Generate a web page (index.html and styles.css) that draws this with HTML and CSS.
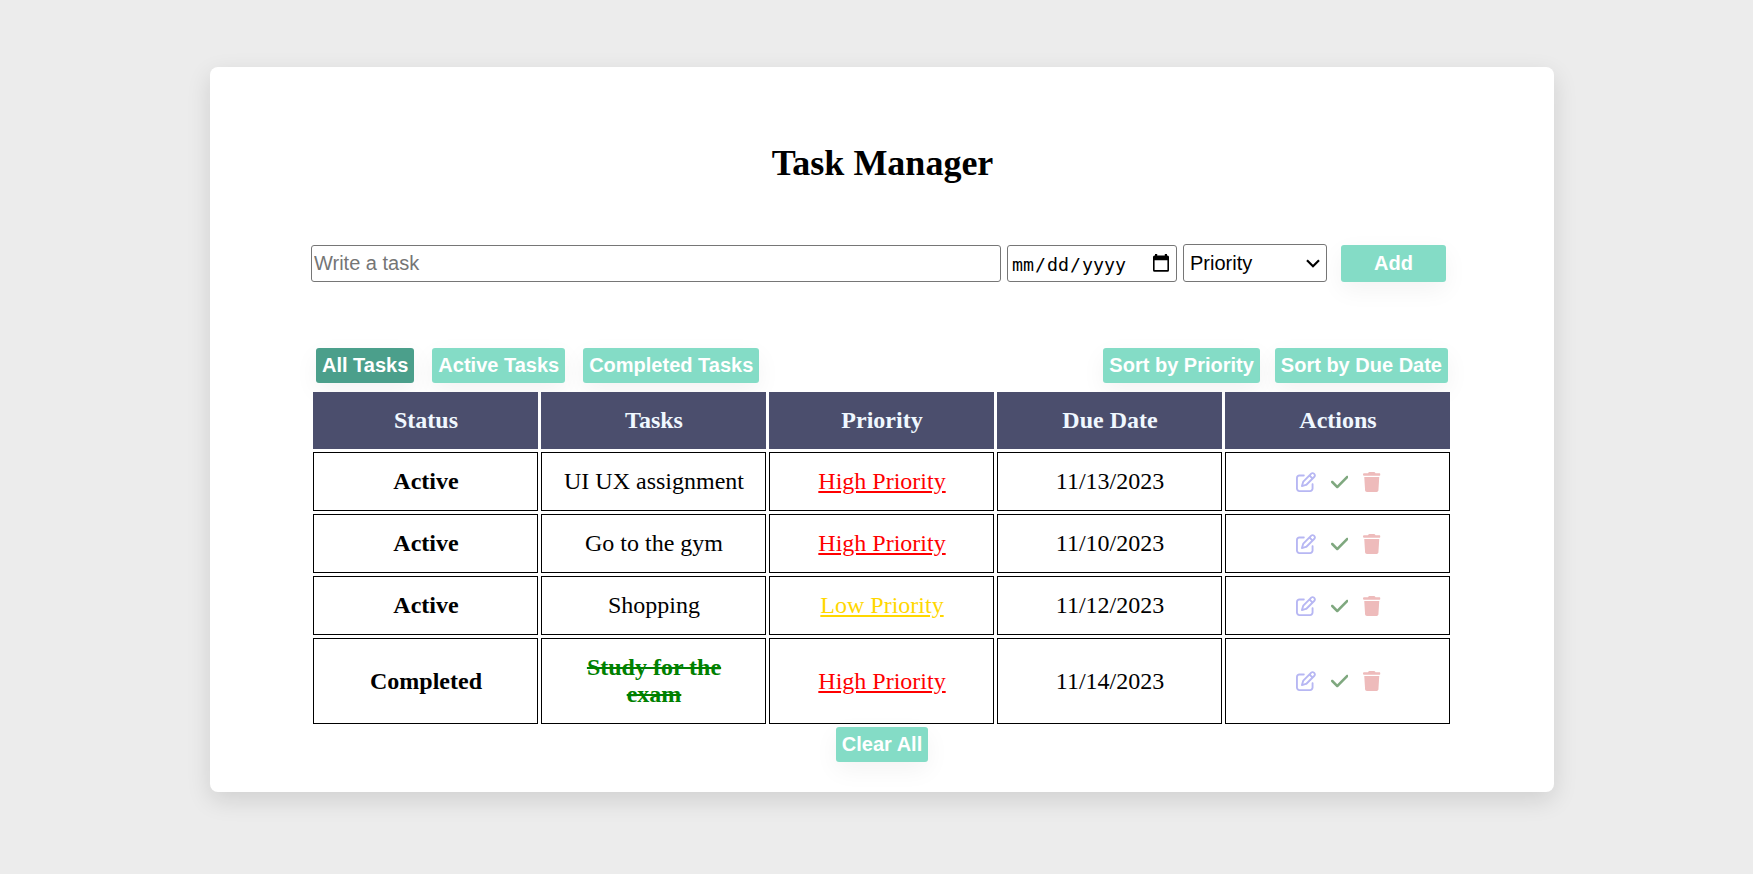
FILE: index.html
```
<!DOCTYPE html>
<html lang="en">
<head>
<meta charset="utf-8">
<title>Task Manager</title>
<link rel="stylesheet" href="styles.css">
</head>
<body>
<svg class="sprite" width="0" height="0" aria-hidden="true">
  <symbol id="edit" viewBox="0 0 512 512"><path d="M441 58.9L453.1 71c9.4 9.4 9.4 24.6 0 33.9L424 134.1 377.9 88 407 58.9c9.4-9.4 24.6-9.4 33.9 0zM209.8 256.2L344 121.9 390.1 168 255.8 302.2c-2.9 2.9-6.5 5-10.4 6.1l-58.5 16.7 16.7-58.5c1.1-3.9 3.2-7.5 6.1-10.4zM373.1 25L175.8 222.2c-8.7 8.7-15 19.4-18.3 31.1l-28.6 100c-2.4 8.4-.1 17.4 6.1 23.6s15.2 8.5 23.6 6.1l100-28.6c11.8-3.4 22.5-9.7 31.1-18.3L487 138.9c28.1-28.1 28.1-73.7 0-101.8L474.9 25C446.8-3.1 401.2-3.1 373.1 25zM88 64C39.4 64 0 103.4 0 152V424c0 48.6 39.4 88 88 88H360c48.6 0 88-39.4 88-88V312c0-13.3-10.7-24-24-24s-24 10.7-24 24V424c0 22.1-17.9 40-40 40H88c-22.1 0-40-17.9-40-40V152c0-22.1 17.9-40 40-40H200c13.3 0 24-10.7 24-24s-10.7-24-24-24H88z"/></symbol>
  <symbol id="check" viewBox="0 0 448 512"><path d="M438.6 105.4c12.5 12.5 12.5 32.8 0 45.3l-256 256c-12.5 12.5-32.8 12.5-45.3 0l-128-128c-12.5-12.5-12.5-32.8 0-45.3s32.8-12.5 45.3 0L160 338.7 393.4 105.4c12.5-12.5 32.8-12.5 45.3 0z"/></symbol>
  <symbol id="trash" viewBox="0 0 448 512"><path d="M135.2 17.7L128 32H32C14.3 32 0 46.3 0 64S14.3 96 32 96H416c17.7 0 32-14.3 32-32s-14.3-32-32-32H320l-7.2-14.3C307.4 6.8 296.3 0 284.2 0H163.8c-12.1 0-23.2 6.8-28.6 17.7zM416 128H32L53.2 467c1.6 25.3 22.6 45 47.9 45H346.9c25.3 0 46.3-19.7 47.9-45L416 128z"/></symbol>
</svg>
<main class="card">
  <h1 class="title">Task Manager</h1>
  <form class="task-form">
    <input class="field task-input" type="text" placeholder="Write a task">
    <div class="field date-input" role="button" tabindex="0">
      <span>mm</span>/<span>dd</span>/<span>yyyy</span>
      <svg class="calendar" width="16" height="18" viewBox="0 0 16 18"><path fill-rule="evenodd" d="M2 0h2.2v1.5h7.6V0H14v1.5h.5A1.5 1.5 0 0 1 16 3v13.2a1.5 1.5 0 0 1-1.5 1.5h-13A1.5 1.5 0 0 1 0 16.200V3a1.500 1.500 0 0 1 1.500-1.500H2zM1.600 6.200v9.900h12.800V6.200z"/></svg>
    </div>
    <div class="field priority-select" role="button" tabindex="0">
      Priority
      <svg width="14" height="9" viewBox="0 0 14 9"><path d="M1 1.200l6 6 6-6" fill="none" stroke="#000" stroke-width="2.200"/></svg>
    </div>
    <button class="btn add-btn" type="button">Add</button>
  </form>
  <div class="toolbar">
    <div class="filters">
      <button class="btn btn-selected">All Tasks</button>
      <button class="btn">Active Tasks</button>
      <button class="btn">Completed Tasks</button>
    </div>
    <div class="sorts">
      <button class="btn">Sort by Priority</button>
      <button class="btn">Sort by Due Date</button>
    </div>
  </div>
  <table class="tasks">
    <thead>
      <tr><th>Status</th><th>Tasks</th><th>Priority</th><th>Due Date</th><th>Actions</th></tr>
    </thead>
    <tbody>
      <tr>
        <td class="status">Active</td><td>UI UX assignment</td><td class="high">High Priority</td><td>11/13/2023</td>
        <td><div class="actions"><svg class="edit"><use href="#edit"/></svg><svg class="check"><use href="#check"/></svg><svg class="trash"><use href="#trash"/></svg></div></td>
      </tr>
      <tr>
        <td class="status">Active</td><td>Go to the gym</td><td class="high">High Priority</td><td>11/10/2023</td>
        <td><div class="actions"><svg class="edit"><use href="#edit"/></svg><svg class="check"><use href="#check"/></svg><svg class="trash"><use href="#trash"/></svg></div></td>
      </tr>
      <tr>
        <td class="status">Active</td><td>Shopping</td><td class="low">Low Priority</td><td>11/12/2023</td>
        <td><div class="actions"><svg class="edit"><use href="#edit"/></svg><svg class="check"><use href="#check"/></svg><svg class="trash"><use href="#trash"/></svg></div></td>
      </tr>
      <tr>
        <td class="status">Completed</td><td class="done">Study for the exam</td><td class="high">High Priority</td><td>11/14/2023</td>
        <td><div class="actions"><svg class="edit"><use href="#edit"/></svg><svg class="check"><use href="#check"/></svg><svg class="trash"><use href="#trash"/></svg></div></td>
      </tr>
    </tbody>
  </table>
  <button class="btn clear-btn">Clear All</button>
</main>
</body>
</html>
```
FILE: styles.css
```
* { box-sizing: border-box; }
body {
  margin: 0;
  padding: 67px 199px 82px 210px;
  background: #ececec;
  font-family: "Liberation Serif", "Times New Roman", serif;
  font-size: 24px;
}
.sprite { position: absolute; }
.card {
  display: flex;
  flex-direction: column;
  height: 725px;
  padding: 76px 101px 30px;
  background: #fff;
  border-radius: 8px;
  box-shadow: 0 8px 24px rgba(0, 0, 0, 0.12);
}
.title {
  margin: 0;
  padding-left: 1px;
  font-size: 36px;
  line-height: 41px;
  text-align: center;
}
.task-form {
  display: flex;
  align-items: flex-end;
  gap: 6px;
  margin-top: 60px;
}
.field {
  height: 37px;
  margin: 0;
  border: 1px solid #767676;
  border-radius: 3px;
  background: #fff;
  color: #000;
  font: 20px "Liberation Sans", Arial, sans-serif;
}
.task-input { width: 690px; padding: 1px 2px; }
.task-input::placeholder { color: #757575; }
.date-input {
  display: flex;
  align-items: center;
  width: 170px;
  padding: 2px 7px 0 3px;
  font: 18.27px "DejaVu Sans Mono", monospace;
}
.date-input span { padding: 0 1px; }
.calendar { margin: 0 0 3px auto; }
.priority-select {
  display: flex;
  align-items: center;
  justify-content: space-between;
  width: 144px;
  height: 38px;
  padding: 0 6px;
}
.btn {
  height: 35px;
  padding: 0 6px;
  border: 0;
  border-radius: 3px;
  background: #84dcc6;
  color: #fff;
  font: bold 20px "Liberation Sans", Arial, sans-serif;
  white-space: nowrap;
  box-shadow: 0 8px 24px rgba(0, 0, 0, 0.05);
}
.btn-selected { background: #4b9f8b; }
.add-btn { width: 105px; height: 37px; margin-left: 8px; }
.toolbar {
  display: flex;
  justify-content: space-between;
  margin: 66px 5px 0;
}
.filters { display: flex; gap: 18px; }
.sorts { display: flex; gap: 15px; }
.tasks {
  position: relative;
  width: 1143px;
  margin: 6px 0 0 -1px;
  border-collapse: separate;
  border-spacing: 3px;
  table-layout: fixed;
  text-align: center;
}
.tasks th {
  padding: 15px 15px 15px 16px;
  background: #4b4e6d;
  color: #f0f8ff;
  line-height: 27px;
}
.tasks td {
  padding: 15px 15px 15px 16px;
  border: 1px solid #000;
  line-height: 27px;
}
.tasks .status { font-weight: bold; }
.tasks .high { color: red; text-decoration: underline; }
.tasks .low { color: gold; text-decoration: underline; }
.tasks .done { color: green; font-weight: bold; text-decoration: line-through; }
.actions {
  display: flex;
  justify-content: center;
  align-items: center;
  gap: 15px;
  height: 27px;
}
.actions svg { width: 17.5px; height: 20px; fill: currentColor; }
.actions .edit { width: 20px; color: #b7b7f3; }
.actions .check { color: #7fa87f; }
.actions .trash { color: #eebbbb; }
.clear-btn { align-self: center; }
```
